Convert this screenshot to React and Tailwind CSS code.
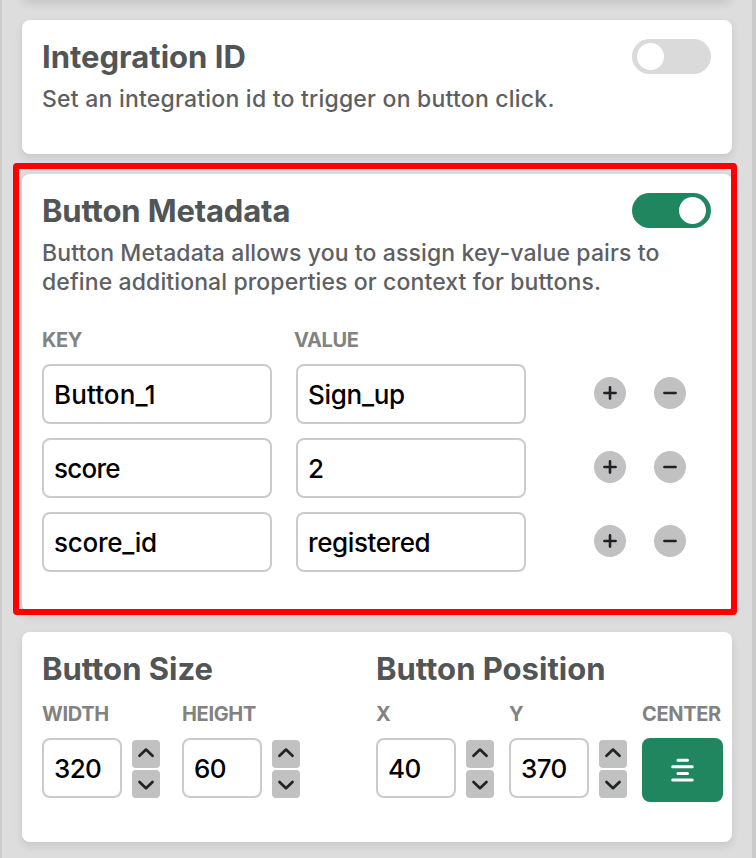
import { useState } from "react";

const metadata = [
  { key: "Button_1", value: "Sign_up", k: "tracking-[0.1px]", v: "tracking-[-0.3px]" },
  { key: "score", value: "2", k: "tracking-[-0.75px]", v: "tracking-[0px]" },
  { key: "score_id", value: "registered", k: "tracking-[-0.25px]", v: "tracking-[-0.4px]" },
];

function Card({ className, children }) {
  return (
    <section className={`mx-[22px] shrink-0 rounded-lg bg-white px-5 shadow-[0_4px_8px_rgba(0,0,0,0.1)] ${className}`}>
      {children}
    </section>
  );
}

function Title({ children, className = "" }) {
  return <h2 className={`whitespace-nowrap text-[31px] font-bold leading-9 text-[#515556] ${className}`}>{children}</h2>;
}

function Label({ children, className = "" }) {
  return <div className={`whitespace-nowrap text-[20px] font-bold leading-6 tracking-[-0.35px] text-[#828282] ${className}`}>{children}</div>;
}

function Toggle({ initial }) {
  const [on, setOn] = useState(initial);
  return (
    <button
      role="switch"
      aria-checked={on}
      onClick={() => setOn(!on)}
      className={`-mr-px flex h-[35px] w-[79px] items-center rounded-full px-[5px] ${on ? "justify-end bg-[#20865f]" : "justify-start bg-[#dadada]"}`}
    >
      <span className="mb-px size-[27px] rounded-full bg-white" />
    </button>
  );
}

function Field({ value, className = "" }) {
  return (
    <div className={`flex h-[60px] items-center rounded-lg border-2 border-[#cbcbcb] bg-white px-2.5 text-[26px] font-medium text-black ${className}`}>
      {value}
    </div>
  );
}

function RoundButton({ label, d }) {
  return (
    <button aria-label={label} className="flex size-8 items-center justify-center rounded-full bg-[#c1c1c1]">
      <svg width="16" height="16" viewBox="0 0 16 16" fill="none" stroke="#202124" strokeWidth="2.6" strokeLinecap="round">
        <path d={d} />
      </svg>
    </button>
  );
}

function Arrow({ label, d }) {
  return (
    <button aria-label={label} className="flex size-7 items-center justify-center rounded bg-[#c1c1c1]">
      <svg width="28" height="28" viewBox="0 0 28 28" fill="none" stroke="#202425" strokeWidth="2.7" strokeLinecap="round" strokeLinejoin="round">
        <path d={d} />
      </svg>
    </button>
  );
}

function Stepper({ label, value }) {
  return (
    <div>
      <Label>{label}</Label>
      <div className="mt-3 flex gap-2.5">
        <Field value={value} className="w-20 tracking-[-0.6px]" />
        <div className="flex flex-col gap-0.5 pt-0.5">
          <Arrow label="Increase" d="M7.5 15.8 14 9.6l6.5 6.2" />
          <Arrow label="Decrease" d="M7.5 12 14 18.2l6.5-6.2" />
        </div>
      </div>
    </div>
  );
}

export default function App() {
  return (
    <main className="relative flex h-[858px] w-[756px] flex-col overflow-hidden border-l-2 border-r-4 border-[#cbcbcb] bg-[#dddddd] font-['Inter',sans-serif]">
      <div className="-ml-0.5 -mr-0.5 flex flex-col">
        <div className="mx-[22px] -mt-5 h-5 rounded-lg bg-white shadow-[0_4px_8px_rgba(0,0,0,0.1)]" />
        <Card className="mt-5 h-[134px] pt-[19px]">
          <div className="flex h-[38px] items-start justify-between pr-0.5">
            <Title>Integration ID</Title>
            <Toggle initial={false} />
          </div>
          <p className="mt-2 whitespace-nowrap text-[23px] font-medium leading-[29px] tracking-[0.22px] text-[#5e5f62]">Set an integration id to trigger on button click.</p>
        </Card>
        <Card className="mt-5 h-[438px] pt-[19px]">
          <div className="flex h-[38px] items-start justify-between pr-0.5">
            <Title className="tracking-[-0.16px]">Button Metadata</Title>
            <Toggle initial={true} />
          </div>
          <p className="mt-2 whitespace-nowrap text-[23px] font-medium leading-[29px] tracking-[0.11px] text-[#5e5f62]">
            <span>Button Metadata allows you to assign key-value pairs to</span>
            <br />
            <span>define additional properties or context for buttons.</span>
          </p>
          <div className="mt-[31px] flex">
            <Label className="w-[252px]">KEY</Label>
            <Label>VALUE</Label>
          </div>
          <div className="mt-3 flex flex-col gap-3.5">
            {metadata.map((row) => (
              <div key={row.key} className="flex">
                <Field value={row.key} className={`w-[230px] ${row.k}`} />
                <Field value={row.value} className={`ml-6 w-[230px] ${row.v}`} />
                <div className="ml-[68px] flex gap-7 pt-[13px]">
                  <RoundButton label="Add row" d="M2.4 8h11.2M8 2.4v11.2" />
                  <RoundButton label="Remove row" d="M2.4 8h11.2" />
                </div>
              </div>
            ))}
          </div>
        </Card>
        <Card className="mt-5 flex h-[210px] pt-[19px]">
          <div className="w-[334px] shrink-0">
            <Title>Button Size</Title>
            <div className="mt-[15px] flex gap-[22px]">
              <Stepper label="WIDTH" value="320" />
              <Stepper label="HEIGHT" value="60" />
            </div>
          </div>
          <div className="shrink-0">
            <Title>Button Position</Title>
            <div className="mt-[15px] flex gap-[15px]">
              <Stepper label="X" value="40" />
              <Stepper label="Y" value="370" />
              <div className="w-[81px]">
                <Label>CENTER</Label>
                <button aria-label="Center" className="mt-3 flex h-16 w-[81px] items-center justify-center rounded-lg bg-[#20865f]">
                  <svg width="25" height="24" viewBox="0 0 25 24" fill="none" stroke="white" strokeWidth="3" strokeLinecap="round">
                    <path d="M8 2.2h9.5M2.7 8.8h19.5M8 15.4h9.5M2.7 22h19.5" />
                  </svg>
                </button>
              </div>
            </div>
          </div>
        </Card>
      </div>
      <div className="pointer-events-none absolute left-[11px] top-[163px] h-[452px] w-[724px] rounded-sm border-[6px] border-[#ff0000]" />
    </main>
  );
}
